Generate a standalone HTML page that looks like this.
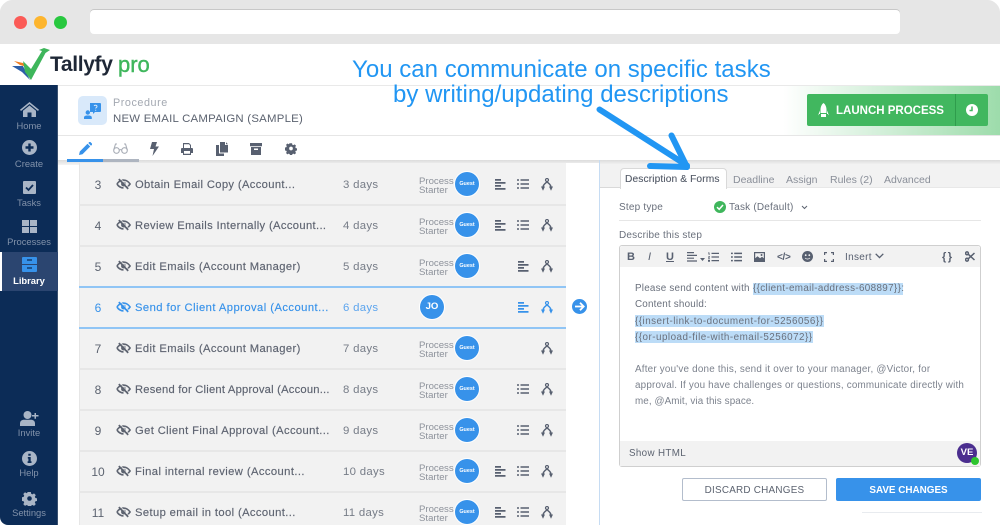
<!DOCTYPE html>
<html lang="en">
<head>
<meta charset="utf-8">
<title>Tallyfy</title>
<style>
html,body{margin:0;padding:0;background:#fff}
#p{position:relative;width:1000px;height:525px;overflow:hidden;background:#fff;font-family:"Liberation Sans",sans-serif;color:#4d5463}
#p div,#p span.a,#p svg.a{position:absolute}
.t{white-space:nowrap}
.sep{left:79px;width:487px;height:2px;background:#e7e7e7}
.num{width:40px;left:78px;margin-top:1px;text-align:center;font-size:12px;line-height:14px;color:#5c6370}
.nm{left:135px;margin-top:1px;font-size:11.2px;line-height:14px;letter-spacing:.36px;color:#5d6370;font-weight:400;-webkit-text-stroke:.15px #5d6370}
.dy{left:343px;margin-top:1px;font-size:11.4px;line-height:14px;letter-spacing:.3px;color:#767c87}
.ps{left:419px;margin-top:1px;font-size:9.6px;line-height:9.3px;color:#8d929b}
.gu{left:455px;width:24px;height:24px;border-radius:50%;background:#3792ea;color:#fff;font-size:5.4px;font-weight:700;line-height:24px;text-align:center;box-shadow:0 0 0 1px #fff}
.sl{left:0;width:58px;text-align:center;font-size:9.4px;line-height:12px;color:#8292aa}
.i{fill:#586070}
.s{fill:#a9b5c6}
.b{fill:#3792ea}
.tb{top:173px;font-size:10.5px;line-height:14px;color:#8a8f99}
.ed{left:635px;font-size:9.85px;line-height:13px;color:#6a707c}
.ed2{left:635px;font-size:9.85px;line-height:13px;color:#7c828d}
</style>
</head>
<body>
<div id="p">
<svg width="0" height="0" style="position:absolute">
<defs>
<symbol id="eye" viewBox="0 0 16 12"><path d="M1 6C3 3 5.5 1.800 8 1.800S13 3 15 6c-1 1.500-2.200 2.600-3.500 3.300M8 10.200C5.500 10.200 3 9 1 6" fill="none" stroke="currentColor" stroke-width="1.700"/><circle cx="8" cy="6" r="2.600" fill="currentColor"/><path d="M3 .8 13 11.200" stroke="currentColor" stroke-width="1.800"/><path d="M3 .8 13 11.200" stroke="#f2f2f2" stroke-width=".7" transform="translate(1.200 -1)"/></symbol>
<symbol id="al" viewBox="0 0 11 11"><path d="M0 0h6v1.700H0zM0 3h10.500v1.700H0zM0 6h6v1.700H0zM0 9h10.500v1.700H0z" fill="currentColor"/></symbol>
<symbol id="li" viewBox="0 0 12 10"><path d="M0 .2h2v1.600H0zM3.500.2H12v1.600H3.500zM0 4.200h2v1.600H0zM3.500 4.200H12v1.600H3.500zM0 8.200h2v1.600H0zM3.500 8.200H12v1.600H3.500z" fill="currentColor"/></symbol>
<symbol id="fk" viewBox="0 0 12 13"><path d="M6 3.300C6 5 2 5.500 2 9.500M6 3.300C6 5 10 5.500 10 9.500" fill="none" stroke="currentColor" stroke-width="1.500"/><circle cx="6" cy="2" r="1.500" fill="none" stroke="currentColor" stroke-width="1.200"/><path d="M0 8.500h4L2 12.800zM8 8.500h4L10 12.800z" fill="currentColor"/></symbol>
</defs>
</svg>

<!-- browser chrome -->
<div style="left:0;top:0;width:1000px;height:44px;background:#e6e6e6"></div>
<div style="left:14px;top:16px;width:13px;height:13px;border-radius:50%;background:#fb5b57"></div>
<div style="left:34px;top:16px;width:13px;height:13px;border-radius:50%;background:#fdb52e"></div>
<div style="left:54px;top:16px;width:13px;height:13px;border-radius:50%;background:#28c83f"></div>
<div style="left:90px;top:10px;width:810px;height:24px;background:#fff;border-radius:4px;box-shadow:0 -1px 0 #c8c8c8"></div>

<!-- logo -->
<svg class="a" style="left:0;top:40px" width="60" height="45" viewBox="0 40 60 45">
<path d="M14 61 23 63 27 67 20 65Z" fill="#ef7d22"/>
<path d="M12 66 23 66 30 80 22 72Z" fill="#2d5fa8"/>
<path d="M23 61 31 69 42 51 39 50 44 48 50 50 45.500 53 31 80 25 72Z" fill="#3eb65b"/>
</svg>
<div class="t" style="left:50px;top:50px;font-size:21px;line-height:30px;font-weight:700;letter-spacing:-.35px;color:#1e2736">Tallyfy</div>
<div class="t" style="left:118px;top:50px;font-size:22px;line-height:30px;color:#3fb65c;-webkit-text-stroke:.4px #3fb65c">pro</div>

<!-- sidebar -->
<div style="left:0;top:85px;width:58px;height:440px;background:#0c2c57;border-bottom-left-radius:8px;border-right:1px solid #3a5170;box-sizing:border-box"></div>
<div style="left:0;top:252px;width:58px;height:39px;background:#2b4570"></div>
<div style="left:0;top:252px;width:2px;height:39px;background:#fff"></div>
<svg class="a" style="left:20px;top:102px" width="19" height="15" viewBox="0 0 19 15"><path class="s" d="M9.500 0 19 7.800l-1 1.200-8.500-7-8.500 7-1-1.200zM9.500 3.500 16 8.800V15h-4.500v-4.500h-4V15H3V8.800z"/></svg>
<div class="sl t" style="top:120px">Home</div>
<svg class="a" style="left:22px;top:140px" width="15" height="15" viewBox="0 0 15 15"><circle class="s" cx="7.500" cy="7.500" r="7.500"/><path d="M6.300 3.500h2.400v2.800h2.800v2.400H8.700v2.800H6.300V8.700H3.500V6.300h2.800z" fill="#0c2c57"/></svg>
<div class="sl t" style="top:158px">Create</div>
<svg class="a" style="left:23px;top:181px" width="13" height="13" viewBox="0 0 13 13"><rect class="s" width="13" height="13" rx="1"/><path d="M3 6.500 5.500 9 10 4" fill="none" stroke="#0c2c57" stroke-width="1.800"/></svg>
<div class="sl t" style="top:197px">Tasks</div>
<svg class="a" style="left:22px;top:220px" width="15" height="13" viewBox="0 0 15 13"><path class="s" d="M0 0h7v6H0zM8 0h7v6H8zM0 7h7v6H0zM8 7h7v6H8z"/></svg>
<div class="sl t" style="top:236px">Processes</div>
<svg class="a" style="left:22px;top:257px" width="15" height="15" viewBox="0 0 15 15"><path class="b" d="M1 0h13a1 1 0 0 1 1 1v6H0V1a1 1 0 0 1 1-1zM0 8h15v6a1 1 0 0 1-1 1H1a1 1 0 0 1-1-1z"/><path d="M5 3h5M5 11h5" stroke="#0c2c57" stroke-width="1.200"/></svg>
<div class="sl t" style="top:275px;color:#fff;font-weight:700;font-size:9.4px">Library</div>
<svg class="a" style="left:20px;top:411px" width="19" height="15" viewBox="0 0 19 15"><circle class="s" cx="7.500" cy="4" r="4"/><path class="s" d="M0 15v-2.500C0 10 2 8.800 4 8.800h7c2 0 4 1.200 4 3.700V15z"/><path class="s" d="M14.500 2h1.500v2h2.500v1.500H16v2.200h-1.500V5.500H12V4h2.500z"/></svg>
<div class="sl t" style="top:427px">Invite</div>
<svg class="a" style="left:22px;top:451px" width="15" height="15" viewBox="0 0 15 15"><circle class="s" cx="7.500" cy="7.500" r="7.500"/><path d="M6.300 2.800h2.400v2H6.300zM5.800 6h2.900v4.300h.8v1.700H5.600v-1.700h.8V7.600h-.6z" fill="#0c2c57"/></svg>
<div class="sl t" style="top:467px">Help</div>
<svg class="a" style="left:22px;top:491px" width="15" height="15" viewBox="0 0 15 15"><path class="s" d="M6 0h3l.4 2 1.500.7 1.800-1.100 2 2-1.100 1.800.7 1.500 2 .4v3l-2 .4-.7 1.500 1.100 1.800-2 2-1.800-1.100-1.500.7-.4 2H6l-.4-2-1.500-.7-1.800 1.100-2-2 1.100-1.800-.7-1.500-2-.4V6l2-.4.7-1.500L.3 2.300l2-2 1.800 1.100L5.600 0z" transform="translate(1 1) scale(.87)"/><circle cx="7.500" cy="7.500" r="2.300" fill="#0c2c57"/></svg>
<div class="sl t" style="top:507px">Settings</div>

<!-- header -->
<div style="left:58px;top:85px;width:942px;height:1px;background:#e9e9e9"></div>
<div style="left:58px;top:135px;width:942px;height:1px;background:#e6e6e6"></div>
<div style="left:78px;top:96px;width:29px;height:29px;border-radius:5px;background:#d9e9fa"></div>
<svg class="a" style="left:84px;top:102px" width="17" height="17" viewBox="0 0 17 17"><path class="b" d="M6 1h10a1 1 0 0 1 1 1v7a1 1 0 0 1-1 1h-5l-2 2v-2H6z"/><path d="M10 3.800c1-1 3-.7 3 .7 0 1-1.300 1-1.300 2M11.700 7.800v1" stroke="#d9e9fa" stroke-width="1" fill="none"/><circle class="b" cx="3.800" cy="10.500" r="2.200"/><path class="b" d="M0 17v-1.500C0 14 1.500 13.500 3 13.500h1.800c1.500 0 3 .5 3 2V17z"/></svg>
<div class="t" style="left:113px;top:96px;font-size:10.8px;line-height:14px;color:#a3a8b1;letter-spacing:.55px">Procedure</div>
<div class="t" style="left:113px;top:112px;font-size:11.4px;line-height:14px;color:#5c6370;letter-spacing:.24px">NEW EMAIL CAMPAIGN (SAMPLE)</div>

<!-- launch -->
<div style="left:783px;top:86px;width:217px;height:49px;background:linear-gradient(90deg,#fff 0%,#9ddcab 100%)"></div>
<div style="left:807px;top:94px;width:181px;height:32px;background:#41b75f;border-radius:2px"></div>
<div style="left:955px;top:94px;width:1px;height:32px;background:#2f9c4c"></div>
<svg class="a" style="left:817px;top:103px" width="13" height="14" viewBox="0 0 13 14"><path fill="#fff" d="M6.500 0C8.500 1.500 9.500 4 9.500 7v3h-6V7C3.500 4 4.500 1.500 6.500 0zM3 7.500V11H1v1.500zM10 7.500V11h2v1.500zM4 11h5v3H4z"/></svg>
<div class="t" style="left:836px;top:104px;font-size:11.5px;line-height:14px;font-weight:700;color:#fff">LAUNCH PROCESS</div>
<svg class="a" style="left:966px;top:104px" width="12" height="12" viewBox="0 0 12 12"><circle cx="6" cy="6" r="6" fill="#fff"/><path d="M6 2.500V6.500H3.500" stroke="#41b75f" stroke-width="1.500" fill="none"/></svg>

<!-- toolbar tabs -->
<div style="left:58px;top:160px;width:942px;height:5px;background:linear-gradient(#dcdcdc,#f4f4f4 100%)"></div>
<div style="left:67px;top:159px;width:36px;height:3px;background:#3792ea"></div>
<div style="left:103px;top:159px;width:36px;height:3px;background:#aeb5c0"></div>
<svg class="a" style="left:79px;top:142px" width="13" height="13" viewBox="0 0 13 13"><path class="b" d="M0 13l.8-3.500L8.500 1.800l2.700 2.700L3.500 12.200zM9.300 1l1-1c.4-.3.8-.3 1.100 0l1.600 1.600c.3.300.3.800 0 1.100l-1 1z"/></svg>
<svg class="a" style="left:113px;top:143px" width="15" height="11" viewBox="0 0 15 11"><g fill="none" stroke="#a9aeb7" stroke-width="1.100"><circle cx="3.500" cy="7.500" r="2.800"/><circle cx="11.500" cy="7.500" r="2.800"/><path d="M6.300 7c.8-.5 1.600-.5 2.400 0M.7 7 2.500 1H4M14.300 7 12.500 1H11"/></g></svg>
<svg class="a" style="left:150px;top:142px" width="9" height="14" viewBox="0 0 9 14"><path class="i" d="M2 0h5L5.500 4.500H9L2.500 14 4 7H0z"/></svg>
<svg class="a" style="left:181px;top:143px" width="12" height="12" viewBox="0 0 12 12"><path class="i" d="M2 0h6l2 2v3h1a1 1 0 0 1 1 1v4h-2v2H2v-2H0V6a1 1 0 0 1 1-1h1zm1 1.200V5h6V2.500L8 1.200zM3 8v2.800h6V8z" fill-rule="evenodd"/></svg>
<svg class="a" style="left:216px;top:142px" width="12" height="14" viewBox="0 0 12 14"><path class="i" d="M4 0h5v3h3v7.500H4zM10 .2 12 2.200h-2zM0 3h3v8.500h5V14H0z"/></svg>
<svg class="a" style="left:250px;top:143px" width="12" height="12" viewBox="0 0 12 12"><path class="i" d="M0 0h12v3.200H0zM1 4h10v8H1zm3 1.500V7h4V5.500z" fill-rule="evenodd"/></svg>
<svg class="a" style="left:285px;top:142px" width="12" height="13" viewBox="0 0 15 15"><path class="i" d="M6 0h3l.4 2 1.500.7 1.800-1.100 2 2-1.100 1.800.7 1.500 2 .4v3l-2 .4-.7 1.500 1.100 1.800-2 2-1.800-1.100-1.500.7-.4 2H6l-.4-2-1.500-.7-1.800 1.100-2-2 1.100-1.800-.7-1.500-2-.4V6l2-.4.7-1.500L.3 2.300l2-2 1.800 1.100L5.600 0z" transform="translate(1 1) scale(.87)"/><circle cx="7.500" cy="7.500" r="2.300" fill="#fff"/></svg>

<!-- list -->
<div style="left:79px;top:163px;width:487px;height:362px;background:#f2f2f2;border-left:1px solid #e6e6e6;box-sizing:border-box"></div>
<div class="sep" style="top:204px"></div>
<div class="sep" style="top:245px"></div>
<div style="left:79px;top:286px;width:487px;height:2px;background:#90c5f5"></div>
<div style="left:79px;top:327px;width:487px;height:2px;background:#90c5f5"></div>
<div class="sep" style="top:368px"></div>
<div class="sep" style="top:409px"></div>
<div class="sep" style="top:450px"></div>
<div class="sep" style="top:491px"></div>

<!-- row 3 -->
<div class="num" style="top:177px">3</div>
<svg class="a" style="left:116px;top:178px;color:#5d6370" width="15" height="12"><use href="#eye"/></svg>
<div class="nm t" style="top:177px">Obtain Email Copy (Account...</div>
<div class="dy t" style="top:177px">3 days</div>
<div class="ps" style="top:176px">Process<br>Starter</div>
<div class="gu" style="top:172px">Guest</div>
<svg class="a" style="left:495px;top:179px;color:#586070" width="11" height="11"><use href="#al"/></svg>
<svg class="a" style="left:517px;top:179px;color:#586070" width="12" height="10"><use href="#li"/></svg>
<svg class="a" style="left:541px;top:178px;color:#586070" width="12" height="13"><use href="#fk"/></svg>

<!-- row 4 -->
<div class="num" style="top:218px">4</div>
<svg class="a" style="left:116px;top:219px;color:#5d6370" width="15" height="12"><use href="#eye"/></svg>
<div class="nm t" style="top:218px">Review Emails Internally (Account...</div>
<div class="dy t" style="top:218px">4 days</div>
<div class="ps" style="top:217px">Process<br>Starter</div>
<div class="gu" style="top:213px">Guest</div>
<svg class="a" style="left:495px;top:220px;color:#586070" width="11" height="11"><use href="#al"/></svg>
<svg class="a" style="left:517px;top:220px;color:#586070" width="12" height="10"><use href="#li"/></svg>
<svg class="a" style="left:541px;top:219px;color:#586070" width="12" height="13"><use href="#fk"/></svg>

<!-- row 5 -->
<div class="num" style="top:259px">5</div>
<svg class="a" style="left:116px;top:260px;color:#5d6370" width="15" height="12"><use href="#eye"/></svg>
<div class="nm t" style="top:259px;letter-spacing:.4px">Edit Emails (Account Manager)</div>
<div class="dy t" style="top:259px">5 days</div>
<div class="ps" style="top:258px">Process<br>Starter</div>
<div class="gu" style="top:254px">Guest</div>
<svg class="a" style="left:518px;top:261px;color:#586070" width="11" height="11"><use href="#al"/></svg>
<svg class="a" style="left:541px;top:260px;color:#586070" width="12" height="13"><use href="#fk"/></svg>

<!-- row 6 -->
<div class="num" style="top:300px;color:#3792ea">6</div>
<svg class="a" style="left:116px;top:301px;color:#3792ea" width="15" height="12"><use href="#eye"/></svg>
<div class="nm t" style="top:300px;color:#3792ea;-webkit-text-stroke:.15px #3792ea;letter-spacing:.46px">Send for Client Approval (Account...</div>
<div class="dy t" style="top:300px;color:#5da5ee">6 days</div>
<div class="gu" style="left:420px;top:295px;font-size:9.6px">JO</div>
<svg class="a" style="left:518px;top:302px;color:#3792ea" width="11" height="11"><use href="#al"/></svg>
<svg class="a" style="left:541px;top:301px;color:#3792ea" width="12" height="13"><use href="#fk"/></svg>

<!-- row 7 -->
<div class="num" style="top:341px">7</div>
<svg class="a" style="left:116px;top:342px;color:#5d6370" width="15" height="12"><use href="#eye"/></svg>
<div class="nm t" style="top:341px;letter-spacing:.4px">Edit Emails (Account Manager)</div>
<div class="dy t" style="top:341px">7 days</div>
<div class="ps" style="top:340px">Process<br>Starter</div>
<div class="gu" style="top:336px">Guest</div>
<svg class="a" style="left:541px;top:342px;color:#586070" width="12" height="13"><use href="#fk"/></svg>

<!-- row 8 -->
<div class="num" style="top:382px">8</div>
<svg class="a" style="left:116px;top:383px;color:#5d6370" width="15" height="12"><use href="#eye"/></svg>
<div class="nm t" style="top:382px;letter-spacing:.22px">Resend for Client Approval (Accoun...</div>
<div class="dy t" style="top:382px">8 days</div>
<div class="ps" style="top:381px">Process<br>Starter</div>
<div class="gu" style="top:377px">Guest</div>
<svg class="a" style="left:517px;top:384px;color:#586070" width="12" height="10"><use href="#li"/></svg>
<svg class="a" style="left:541px;top:383px;color:#586070" width="12" height="13"><use href="#fk"/></svg>

<!-- row 9 -->
<div class="num" style="top:423px">9</div>
<svg class="a" style="left:116px;top:424px;color:#5d6370" width="15" height="12"><use href="#eye"/></svg>
<div class="nm t" style="top:423px;letter-spacing:.39px">Get Client Final Approval (Account...</div>
<div class="dy t" style="top:423px">9 days</div>
<div class="ps" style="top:422px">Process<br>Starter</div>
<div class="gu" style="top:418px">Guest</div>
<svg class="a" style="left:517px;top:425px;color:#586070" width="12" height="10"><use href="#li"/></svg>
<svg class="a" style="left:541px;top:424px;color:#586070" width="12" height="13"><use href="#fk"/></svg>

<!-- row 10 -->
<div class="num" style="top:464px">10</div>
<svg class="a" style="left:116px;top:465px;color:#5d6370" width="15" height="12"><use href="#eye"/></svg>
<div class="nm t" style="top:464px;letter-spacing:.42px">Final internal review (Account...</div>
<div class="dy t" style="top:464px">10 days</div>
<div class="ps" style="top:463px">Process<br>Starter</div>
<div class="gu" style="top:459px">Guest</div>
<svg class="a" style="left:495px;top:466px;color:#586070" width="11" height="11"><use href="#al"/></svg>
<svg class="a" style="left:517px;top:466px;color:#586070" width="12" height="10"><use href="#li"/></svg>
<svg class="a" style="left:541px;top:465px;color:#586070" width="12" height="13"><use href="#fk"/></svg>

<!-- row 11 -->
<div class="num" style="top:505px">11</div>
<svg class="a" style="left:116px;top:506px;color:#5d6370" width="15" height="12"><use href="#eye"/></svg>
<div class="nm t" style="top:505px;letter-spacing:.39px">Setup email in tool (Account...</div>
<div class="dy t" style="top:505px">11 days</div>
<div class="ps" style="top:504px">Process<br>Starter</div>
<div class="gu" style="top:500px">Guest</div>
<svg class="a" style="left:495px;top:507px;color:#586070" width="11" height="11"><use href="#al"/></svg>
<svg class="a" style="left:517px;top:507px;color:#586070" width="12" height="10"><use href="#li"/></svg>
<svg class="a" style="left:541px;top:506px;color:#586070" width="12" height="13"><use href="#fk"/></svg>

<!-- white gutter + arrow -->
<div style="left:566px;top:163px;width:33px;height:362px;background:#fff"></div>
<svg class="a" style="left:572px;top:299px" width="15" height="15" viewBox="0 0 15 15"><circle class="b" cx="7.500" cy="7.500" r="7.500"/><path d="M3 7.500h8.500M8 3.800l3.700 3.700L8 11.200" fill="none" stroke="#fff" stroke-width="1.800"/></svg>

<!-- right panel -->
<div style="left:599px;top:160px;width:1px;height:365px;background:#c6dcf3"></div>
<div style="left:600px;top:165px;width:400px;height:23px;background:#f2f2f2"></div>
<div style="left:600px;top:188px;width:400px;height:337px;background:#fff"></div>
<div style="left:600px;top:187px;width:20px;height:1px;background:#d9d9d9"></div>
<div style="left:726px;top:187px;width:274px;height:1px;background:#e8e8e8"></div>
<div style="left:620px;top:168px;width:107px;height:21px;background:#fff;border:1px solid #d9d9d9;border-bottom:0;border-radius:4px 4px 0 0;box-sizing:border-box"></div>
<div class="t" style="left:625px;top:173px;font-size:10.2px;line-height:14px;color:#545b68;letter-spacing:.12px;-webkit-text-stroke:.12px #545b68">Description &amp; Forms</div>
<div class="t tb" style="left:733px">Deadline</div>
<div class="t tb" style="left:786px">Assign</div>
<div class="t tb" style="left:830px">Rules (2)</div>
<div class="t tb" style="left:884px">Advanced</div>

<div class="t" style="left:619px;top:201px;font-size:10px;line-height:14px;color:#6a707c;letter-spacing:.2px">Step type</div>
<svg class="a" style="left:714px;top:201px" width="12" height="12" viewBox="0 0 12 12"><circle cx="6" cy="6" r="6" fill="#3fb65c"/><path d="M3 6.200 5.200 8.300 9 4" fill="none" stroke="#fff" stroke-width="1.500"/></svg>
<div class="t" style="left:729px;top:201px;font-size:10px;line-height:14px;color:#6a707c;letter-spacing:.2px">Task (Default)</div>
<svg class="a" style="left:801px;top:205px" width="7" height="5" viewBox="0 0 7 5"><path d="M1 1 3.500 3.500 6 1" fill="none" stroke="#5c6370" stroke-width="1"/></svg>
<div style="left:619px;top:220px;width:362px;height:1px;background:#e6e6e6"></div>
<div class="t" style="left:619px;top:229px;font-size:10px;line-height:14px;color:#6a707c;letter-spacing:.2px">Describe this step</div>

<!-- editor -->
<div style="left:619px;top:245px;width:362px;height:222px;border:1px solid #cfcfcf;border-radius:3px;box-sizing:border-box;background:#fff"></div>
<div style="left:620px;top:246px;width:360px;height:21px;background:#f2f2f2;border-radius:3px 3px 0 0"></div>
<div class="t" style="left:627px;top:251px;font-size:11px;line-height:13px;font-weight:700;color:#586070">B</div>
<div class="t" style="left:648px;top:251px;font-size:11px;line-height:13px;font-style:italic;color:#586070">I</div>
<div class="t" style="left:666px;top:251px;font-size:11px;line-height:13px;font-weight:700;color:#586070;text-decoration:underline">U</div>
<svg class="a" style="left:687px;top:252px;color:#586070" width="13" height="10" viewBox="0 0 13 10"><path d="M0 0h7v1.200H0zM0 2.800h10v1.200H0zM0 5.600h7v1.200H0zM0 8.400h10v1.200H0z" fill="currentColor"/></svg>
<svg class="a" style="left:700px;top:258px" width="5" height="4" viewBox="0 0 5 4"><path class="i" d="M0 0h5L2.500 3z"/></svg>
<svg class="a" style="left:708px;top:252px" width="11" height="10" viewBox="0 0 11 10"><path class="i" d="M0 .5h1.500v2.500H.7V1.400H0zM3.500.8H11V2H3.500zM0 4.200h2v.7l-1 1h1v.7H0v-.7l1.100-1.100H0zM3.500 4.400H11v1.200H3.500zM0 7.800h2v2H0zM3.500 8H11v1.200H3.500z"/></svg>
<svg class="a" style="left:731px;top:252px;color:#586070" width="11" height="10"><use href="#li"/></svg>
<svg class="a" style="left:754px;top:252px" width="11" height="10" viewBox="0 0 11 10"><path class="i" d="M0 0h11v10H0zM1.200 1.200v5l2.300-2 2.500 2 2-1.500 1.800 1.500v-5zM7.500 2a1 1 0 1 0 .1 0z" fill-rule="evenodd"/></svg>
<div class="t" style="left:777px;top:251px;font-size:10px;line-height:13px;font-weight:700;color:#586070;letter-spacing:-.3px">&lt;/&gt;</div>
<svg class="a" style="left:802px;top:251px" width="11" height="11" viewBox="0 0 11 11"><circle class="i" cx="5.500" cy="5.500" r="5.500"/><circle cx="3.700" cy="4.200" r=".9" fill="#f2f2f2"/><circle cx="7.300" cy="4.200" r=".9" fill="#f2f2f2"/><path d="M3 7c1.500 1.300 3.500 1.300 5 0" stroke="#f2f2f2" stroke-width=".8" fill="none"/></svg>
<svg class="a" style="left:824px;top:252px" width="10" height="10" viewBox="0 0 10 10"><path d="M.6 3V.6H3M7 .6h2.400V3M9.400 7v2.400H7M3 9.400H.6V7" fill="none" stroke="#586070" stroke-width="1.200"/></svg>
<div class="t" style="left:845px;top:251px;font-size:10px;line-height:13px;color:#586070;letter-spacing:.3px">Insert</div>
<svg class="a" style="left:875px;top:253px" width="9" height="6" viewBox="0 0 9 6"><path d="M.7.800 4.500 4.600 8.300.8" fill="none" stroke="#586070" stroke-width="1.300"/></svg>
<div class="t" style="left:942px;top:250px;font-size:11px;line-height:14px;font-weight:700;color:#586070;letter-spacing:1.500px">{}</div>
<svg class="a" style="left:965px;top:251px" width="10" height="11" viewBox="0 0 10 11"><g fill="none" stroke="#586070" stroke-width="1.500"><circle cx="2" cy="2.300" r="1.400"/><circle cx="2" cy="8.700" r="1.400"/><path d="M3.200 3.200 9.500 9M3.200 7.800 9.500 2"/></g></svg>

<div style="left:753px;top:283px;width:150px;height:12px;background:#bcdcf7"></div>
<div style="left:635px;top:315px;width:189px;height:12px;background:#bcdcf7"></div>
<div style="left:635px;top:331px;width:178px;height:12px;background:#bcdcf7"></div>
<div class="t ed" style="top:282px;letter-spacing:.22px">Please send content with</div>
<div class="t ed" style="left:753px;top:282px;letter-spacing:.35px">{{client-email-address-608897}}:</div>
<div class="t ed" style="top:298px;letter-spacing:.2px">Content should:</div>
<div class="t ed" style="top:315px;letter-spacing:.48px">{{insert-link-to-document-for-5256056}}</div>
<div class="t ed" style="top:331px;letter-spacing:.48px">{{or-upload-file-with-email-5256072}}</div>
<div class="t ed2" style="top:363px;letter-spacing:.21px">After you've done this, send it over to your manager, @Victor, for</div>
<div class="t ed2" style="top:379px;letter-spacing:.185px">approval. If you have challenges or questions, communicate directly with</div>
<div class="t ed2" style="top:395px;letter-spacing:.1px">me, @Amit, via this space.</div>

<div style="left:620px;top:441px;width:360px;height:25px;background:#f2f2f2"></div>
<div class="t" style="left:629px;top:447px;font-size:9.8px;line-height:13px;color:#5c6370;letter-spacing:.35px">Show HTML</div>
<div style="left:957px;top:443px;width:20px;height:20px;border-radius:50%;background:#4b2e8f;color:#fff;font-size:9.5px;font-weight:700;line-height:20px;text-align:center">VE</div>
<div style="left:971px;top:457px;width:8px;height:8px;border-radius:50%;background:#2ec52e"></div>

<div style="left:682px;top:478px;width:145px;height:23px;box-sizing:border-box;border:1.500px solid #b3bdcc;border-radius:2px;background:#fff;color:#5c6370;font-size:9.9px;line-height:24px;text-align:center;letter-spacing:.25px">DISCARD CHANGES</div>
<div style="left:836px;top:478px;width:145px;height:23px;border-radius:2px;background:#3792ea;color:#fff;font-size:9.9px;font-weight:700;line-height:26px;text-align:center">SAVE CHANGES</div>
<div style="left:862px;top:512px;width:120px;height:1px;background:#e8ebef"></div>

<!-- annotation -->
<div class="t" style="left:352px;top:55px;font-size:24px;line-height:29px;color:#2196f3;letter-spacing:.02px">You can communicate on specific tasks</div>
<div class="t" style="left:393px;top:80px;font-size:24px;line-height:29px;color:#2196f3;letter-spacing:.02px">by writing/updating descriptions</div>
<svg class="a" style="left:590px;top:100px" width="110" height="75" viewBox="0 0 110 75"><path d="M9.500 9.500 97 65.500M81.500 35.500 97 67 60 66" fill="none" stroke="#2196f3" stroke-width="6" stroke-linecap="round" stroke-linejoin="round"/></svg>

<!-- corner -->
<svg class="a" style="left:984px;top:0" width="16" height="16" viewBox="0 0 16 16"><path d="M4 0C10 0 16 6 16 12V0z" fill="#fff"/></svg>
<svg class="a" style="left:0;top:0" width="16" height="16" viewBox="0 0 16 16"><path d="M12 0C6 0 0 6 0 12V0z" fill="#fff"/></svg>
</div>
</body>
</html>
